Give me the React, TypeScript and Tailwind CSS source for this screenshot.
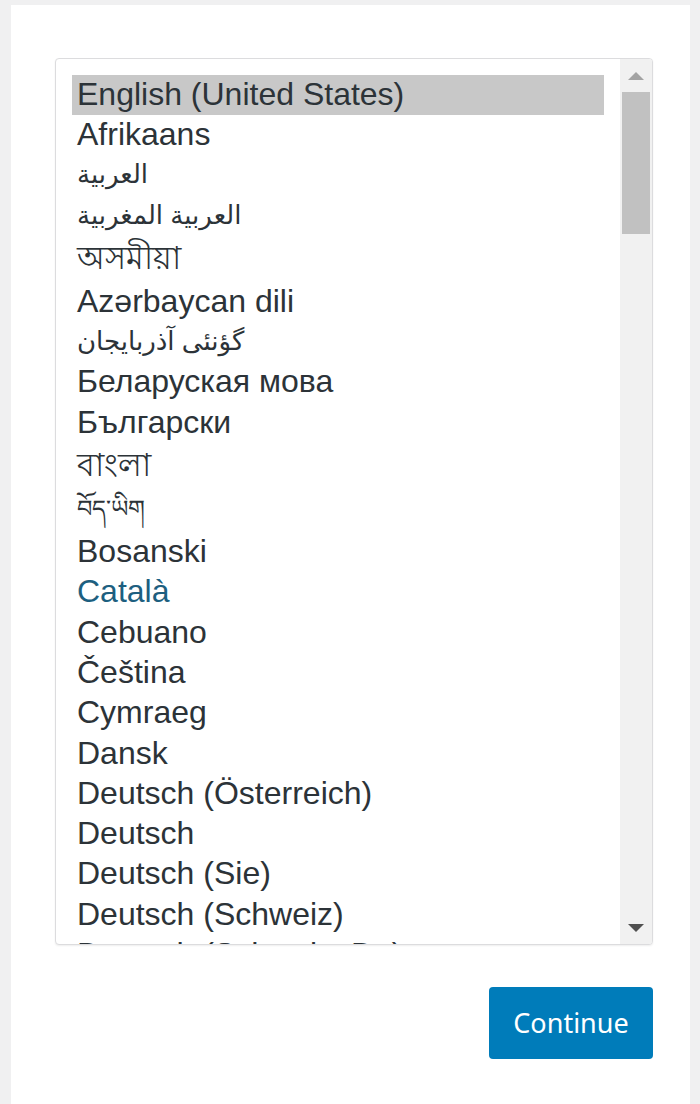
const languages: { label: string; h: string; size?: string; active?: boolean; link?: boolean }[] = [
  { label: "English (United States)", h: "h-[40.3px]", active: true },
  { label: "Afrikaans", h: "h-[40.3px]" },
  { label: "العربية", h: "h-[40.3px]", size: "text-[26px]" },
  { label: "العربية المغربية", h: "h-[40.3px]", size: "text-[26px]" },
  { label: "অসমীয়া", h: "h-[46px]" },
  { label: "Azərbaycan dili", h: "h-[40.3px]" },
  { label: "گؤنئی آذربایجان", h: "h-[40.3px]", size: "text-[26px]" },
  { label: "Беларуская мова", h: "h-[40.3px]" },
  { label: "Български", h: "h-[40.3px]" },
  { label: "বাংলা", h: "h-[46px]" },
  { label: "བོད་ཡིག", h: "h-[43px]", size: "text-[24px]" },
  { label: "Bosanski", h: "h-[40.3px]" },
  { label: "Català", h: "h-[40.3px]", link: true },
  { label: "Cebuano", h: "h-[40.3px]" },
  { label: "Čeština", h: "h-[40.3px]" },
  { label: "Cymraeg", h: "h-[40.3px]" },
  { label: "Dansk", h: "h-[40.3px]" },
  { label: "Deutsch (Österreich)", h: "h-[40.3px]" },
  { label: "Deutsch", h: "h-[40.3px]" },
  { label: "Deutsch (Sie)", h: "h-[40.3px]" },
  { label: "Deutsch (Schweiz)", h: "h-[40.3px]" },
  { label: "Deutsch (Schweiz, Du)", h: "h-[40.3px]" },
];

export default function App() {
  return (
    <div className="min-h-[1104px] bg-[#f0f0f1] pt-[5px] pl-[11px] font-['Liberation_Sans',Arial,sans-serif]">
      <div className="w-[679px] min-h-[1099px] bg-white pl-[44px] pr-[37px] pt-[53px]">
        {/* language list */}
        <div className="flex h-[887px] rounded-[4px] border border-[#dcdcde] bg-white shadow-[0_1px_2px_rgba(0,0,0,0.07)] overflow-hidden">
          <div className="flex-1 overflow-hidden pt-[16px] px-[16px]">
            {languages.map((lang) => (
              <div
                key={lang.label}
                className={`${lang.h} flex items-center pl-[5px] pb-[3px] whitespace-nowrap leading-none ${
                  lang.size ?? "text-[32px]"
                } ${lang.active ? "bg-[#c8c8c8]" : ""} ${lang.link ? "text-[#1d5f80]" : "text-[#2c3338]"}`}
              >
                <span className="font-['Liberation_Sans','DejaVu_Sans','Noto_Sans',sans-serif]">{lang.label}</span>
              </div>
            ))}
          </div>
          {/* scrollbar */}
          <div className="w-[32px] bg-[#f1f1f1] flex flex-col">
            <div className="h-[33px] flex items-center justify-center">
              <svg width="16" height="8" viewBox="0 0 16 8">
                <path d="M0 8 L8 0 L16 8 Z" fill="#a3a3a3" />
              </svg>
            </div>
            <div className="mx-[2px] h-[142px] bg-[#c1c1c1]" />
            <div className="flex-1" />
            <div className="h-[33px] flex items-center justify-center">
              <svg width="16" height="8" viewBox="0 0 16 8">
                <path d="M0 0 L16 0 L8 8 Z" fill="#505050" />
              </svg>
            </div>
          </div>
        </div>

        <div className="flex justify-end mt-[42px]">
          <button className="w-[164px] h-[72px] rounded-[4px] bg-[#007cba] text-white text-[27px] font-['Noto_Sans','Open_Sans',sans-serif]">
            Continue
          </button>
        </div>
      </div>
    </div>
  );
}
